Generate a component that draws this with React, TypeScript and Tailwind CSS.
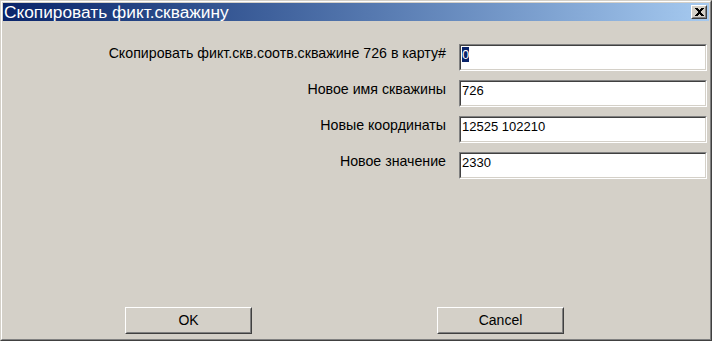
const font = { fontFamily: '"Liberation Sans", Arial, sans-serif' };

function Field({ label, value, selected = false }: { label: string; value: string; selected?: boolean }) {
  return (
    <div className="flex h-[36px] items-start">
      <div className="w-[443px] pt-[1px] text-right text-[14.2px] leading-[16px] text-black">{label}</div>
      <div className="ml-[13px] h-[27px] w-[248px] border border-b-white border-l-[#808080] border-r-white border-t-[#808080]">
        <div className="h-full w-full border border-b-[#d4d0c8] border-l-[#404040] border-r-[#d4d0c8] border-t-[#404040] bg-white px-[1px] pt-[1px] text-[13px] leading-[15px] text-black">
          {selected ? <span className="bg-[#0a246a] text-white">{value}</span> : value}
        </div>
      </div>
    </div>
  );
}

function WinButton({ children }: { children: React.ReactNode }) {
  return (
    <div className="h-[27px] w-[127px] border border-b-[#404040] border-l-white border-r-[#404040] border-t-white">
      <div className="flex h-full w-full items-center justify-center border border-b-[#808080] border-l-[#d4d0c8] border-r-[#808080] border-t-[#d4d0c8] bg-[#d4d0c8] text-[14px] text-black">
        {children}
      </div>
    </div>
  );
}

export default function App() {
  return (
    <div style={font} className="h-[341px] w-[712px] select-none">
      <div className="h-full w-full border border-b-[#404040] border-l-[#d4d0c8] border-r-[#404040] border-t-[#d4d0c8]">
        <div className="flex h-full w-full flex-col border border-b-[#808080] border-l-white border-r-[#808080] border-t-white bg-[#d4d0c8] p-px">
          <div className="flex h-[18px] shrink-0 items-center justify-between bg-gradient-to-r from-[#0a246a] to-[#a6caf0] pl-[1px] pr-[2px]">
            <span className="text-[17.3px] leading-[18px] text-white">Скопировать фикт.скважину</span>
            <div className="h-[14px] w-[16px] border border-b-[#404040] border-l-white border-r-[#404040] border-t-white">
              <div className="flex h-full w-full items-center justify-center border border-b-[#808080] border-l-[#d4d0c8] border-r-[#808080] border-t-[#d4d0c8] bg-[#d4d0c8]">
                <svg width="9" height="8" viewBox="0 0 9 8">
                  <path d="M0 0h3v1h1v1h1V1h1V0h3v1H8v1H7v1H6v2h1v1h1v1h1v1H6V7H5V6H4v1H3v1H0V7h1V6h1V5h1V3H2V2H1V1H0z" fill="#000" />
                </svg>
              </div>
            </div>
          </div>
          <div className="flex flex-1 flex-col pt-[23px]">
            <Field label="Скопировать фикт.скв.соотв.скважине 726 в карту#" value="0" selected />
            <Field label="Новое имя скважины" value="726" />
            <Field label="Новые координаты" value="12525 102210" />
            <Field label="Новое значение" value="2330" />
            <div className="flex-1" />
            <div className="flex pb-[4px] pl-[122px]">
              <WinButton>OK</WinButton>
              <div className="w-[185px]" />
              <WinButton>Cancel</WinButton>
            </div>
          </div>
        </div>
      </div>
    </div>
  );
}
